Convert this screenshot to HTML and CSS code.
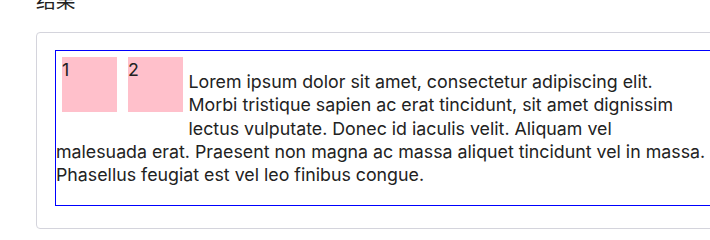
FILE: index.html
```html
<!DOCTYPE html>
<html lang="zh-CN">
<head>
<meta charset="utf-8">
<title>结果</title>
<link rel="stylesheet" href="styles.css">
</head>
<body>
<h4 class="section-title">结果</h4>
<div class="card">
  <div class="float-demo">
    <div class="float-item">1</div>
    <div class="float-item">2</div>
    <p class="float-text">Lorem ipsum dolor sit amet, consectetur adipiscing elit. Morbi tristique sapien ac erat tincidunt, sit amet dignissim lectus vulputate. Donec id iaculis velit. Aliquam vel malesuada erat. Praesent non magna ac massa aliquet tincidunt vel in massa. Phasellus feugiat est vel leo finibus congue.</p>
  </div>
</div>
</body>
</html>
```

FILE: styles.css
```css
html, body {
  margin: 0;
  padding: 0;
  background: #ffffff;
}

body {
  overflow: hidden;
  color: #222222;
  font-family: Inter, "Noto Sans", sans-serif;
}

.section-title {
  margin: -14px 0 18px 36px;
  font-family: "Noto Sans CJK SC", "Noto Sans", sans-serif;
  font-size: 19.8px;
  font-weight: 400;
  line-height: 28px;
  color: #222222;
}

.card {
  width: 760px;
  margin-left: 36px;
  padding: 17px 0 22px 18px;
  border: 1px solid #d4d4dc;
  border-radius: 4px;
}

.float-demo {
  width: 649.7px;
  padding-right: 40px;
  border: 1px solid #0000ff;
  font-size: 17.8px;
  line-height: 23.3px;
}

.float-item {
  float: left;
  box-sizing: border-box;
  width: 55px;
  height: 55px;
  margin: 6px 5px 6px 6px;
  padding-top: 1px;
  background: #ffc0cb;
}

.float-item + .float-item {
  margin-right: 5.5px;
}

.float-text {
  margin: 19.2px 0 18.3px;
}
```
